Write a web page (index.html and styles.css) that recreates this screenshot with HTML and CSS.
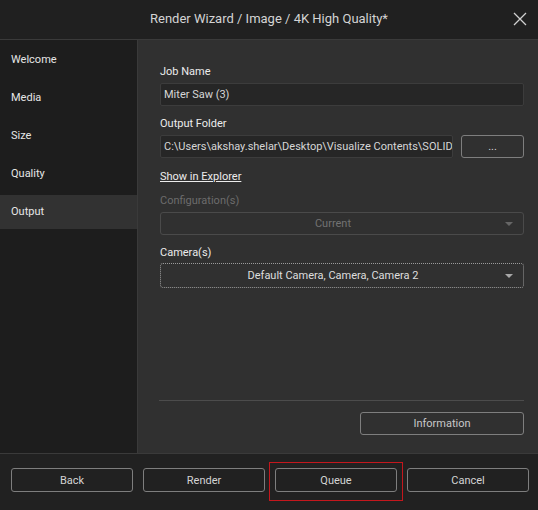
FILE: index.html
```html
<!DOCTYPE html>
<html lang="en">
<head>
    <meta charset="UTF-8">
    <meta name="viewport" content="width=device-width, initial-scale=1.0">
    <title>Render Wizard</title>
    <link rel="stylesheet" href="styles.css">
</head>
<body>
    <div class="window">
        <div class="titlebar">
            <span class="title">Render Wizard / Image / 4K High Quality*</span>
            <svg class="close" width="14" height="14" viewBox="0 0 14 14">
                <path d="M1 1 L13 13 M13 1 L1 13" stroke="#d0d0d0" stroke-width="1.3" fill="none"/>
            </svg>
        </div>

        <div class="main">
            <div class="sidebar">
                <div class="nav-item">Welcome</div>
                <div class="nav-item">Media</div>
                <div class="nav-item">Size</div>
                <div class="nav-item">Quality</div>
                <div class="nav-item active">Output</div>
            </div>

            <div class="panel">
                <div class="label">Job Name</div>
                <div class="field">Miter Saw (3)</div>

                <div class="label gap">Output Folder</div>
                <div class="row">
                    <div class="field path">C:\Users\akshay.shelar\Desktop\Visualize Contents\SOLIDWORKS</div>
                    <button class="btn browse">...</button>
                </div>

                <a class="link" href="#">Show in Explorer</a>

                <div class="label gap config disabled">Configuration(s)</div>
                <div class="select disabled">
                    <span>Current</span>
                    <i class="arrow"></i>
                </div>

                <div class="label gap camera">Camera(s)</div>
                <div class="select focused">
                    <span>Default Camera, Camera, Camera 2</span>
                    <i class="arrow"></i>
                </div>

                <div class="divider"></div>
                <div class="info-row">
                    <button class="btn info">Information</button>
                </div>
            </div>
        </div>

        <div class="footer">
            <button class="btn">Back</button>
            <button class="btn">Render</button>
            <button class="btn">Queue</button>
            <button class="btn">Cancel</button>
            <div class="highlight"></div>
        </div>
    </div>
</body>
</html>
```

FILE: styles.css
```css
* {
    box-sizing: border-box;
}
body {
    margin: 0;
    background: #212121;
    font-family: Roboto, "Noto Sans", sans-serif;
    font-size: 11px;
    color: #e2e2e2;
}
.window {
    width: 538px;
    height: 510px;
    display: flex;
    flex-direction: column;
    position: relative;
    overflow: hidden;
}
.titlebar {
    height: 40px;
    flex-shrink: 0;
    background: #202020;
    border-bottom: 1px solid #3a3a3a;
    display: flex;
    align-items: center;
    justify-content: center;
    position: relative;
}
.title {
    font-size: 13px;
    color: #d4d4d4;
    margin-top: -2px;
}
.close {
    position: absolute;
    right: 11px;
    top: 12px;
}
.main {
    display: flex;
    height: 413px;
    flex-shrink: 0;
}
.sidebar {
    width: 138px;
    flex-shrink: 0;
    background: #1d1d1d;
    border-right: 1px solid #3a3a3a;
    padding-top: 3px;
    display: flex;
    flex-direction: column;
    gap: 4px;
}
.nav-item {
    height: 34px;
    line-height: 34px;
    padding-left: 11px;
    color: #e6e6e6;
}
.nav-item.active {
    background: #323232;
}
.panel {
    flex: 1;
    min-width: 0;
    background: #303030;
    padding: 25px 14px 18px 22px;
    display: flex;
    flex-direction: column;
}
.label {
    line-height: 14px;
    color: #ececec;
    margin-bottom: 4px;
}
.label.gap {
    margin-top: 11px;
}
.label.config {
    margin-top: 10px;
}
.label.camera {
    margin-bottom: 3px;
}
.label.disabled {
    color: #6c6c6c;
}
.field {
    height: 23px;
    line-height: 21px;
    background: #262626;
    border: 1px solid #3c3c3c;
    border-radius: 2px;
    padding: 0 3px;
    color: #d6d6d6;
    white-space: nowrap;
    overflow: hidden;
}
.row {
    display: flex;
    gap: 8px;
}
.path {
    flex: 1;
    min-width: 0;
}
.btn {
    font-family: inherit;
    font-size: 11px;
    color: #d4d4d4;
    background: transparent;
    border: 1px solid #7e7e7e;
    border-radius: 3px;
    height: 24px;
    padding: 0;
    flex-shrink: 0;
}
.browse {
    width: 63px;
    height: 23px;
    line-height: 14px;
}
.link {
    color: #ececec;
    text-decoration: underline;
    margin-top: 12px;
    line-height: 14px;
    align-self: flex-start;
}
.select {
    height: 23px;
    border: 1px solid #4a4a4a;
    border-radius: 3px;
    display: flex;
    align-items: center;
    position: relative;
    padding-right: 14px;
}
.select span {
    flex: 1;
    text-align: center;
}
.select.disabled {
    color: #727272;
}
.select.focused {
    height: 25px;
    border: 1px dotted #9a9a9a;
    color: #dedede;
}
.arrow {
    width: 0;
    height: 0;
    border-left: 4px solid transparent;
    border-right: 4px solid transparent;
    border-top: 4px solid #a8a8a8;
    margin-right: -4px;
}
.select.disabled .arrow {
    border-top-color: #666;
}
.divider {
    margin-top: auto;
    height: 1px;
    background: #4c4c4c;
    margin-left: -1px;
}
.info-row {
    display: flex;
    justify-content: flex-end;
    margin-top: 11px;
}
.info {
    width: 164px;
    height: 23px;
    color: #c8c8c8;
}
.footer {
    flex: 1;
    background: #212121;
    border-top: 1px solid #3a3a3a;
    display: flex;
    gap: 10px;
    padding: 14px 9px 0 11px;
    align-items: flex-start;
    position: relative;
}
.footer .btn {
    width: 122px;
}
.highlight {
    position: absolute;
    left: 269px;
    top: 8px;
    width: 134px;
    height: 39px;
    border: 1px solid #c4171d;
}
```
